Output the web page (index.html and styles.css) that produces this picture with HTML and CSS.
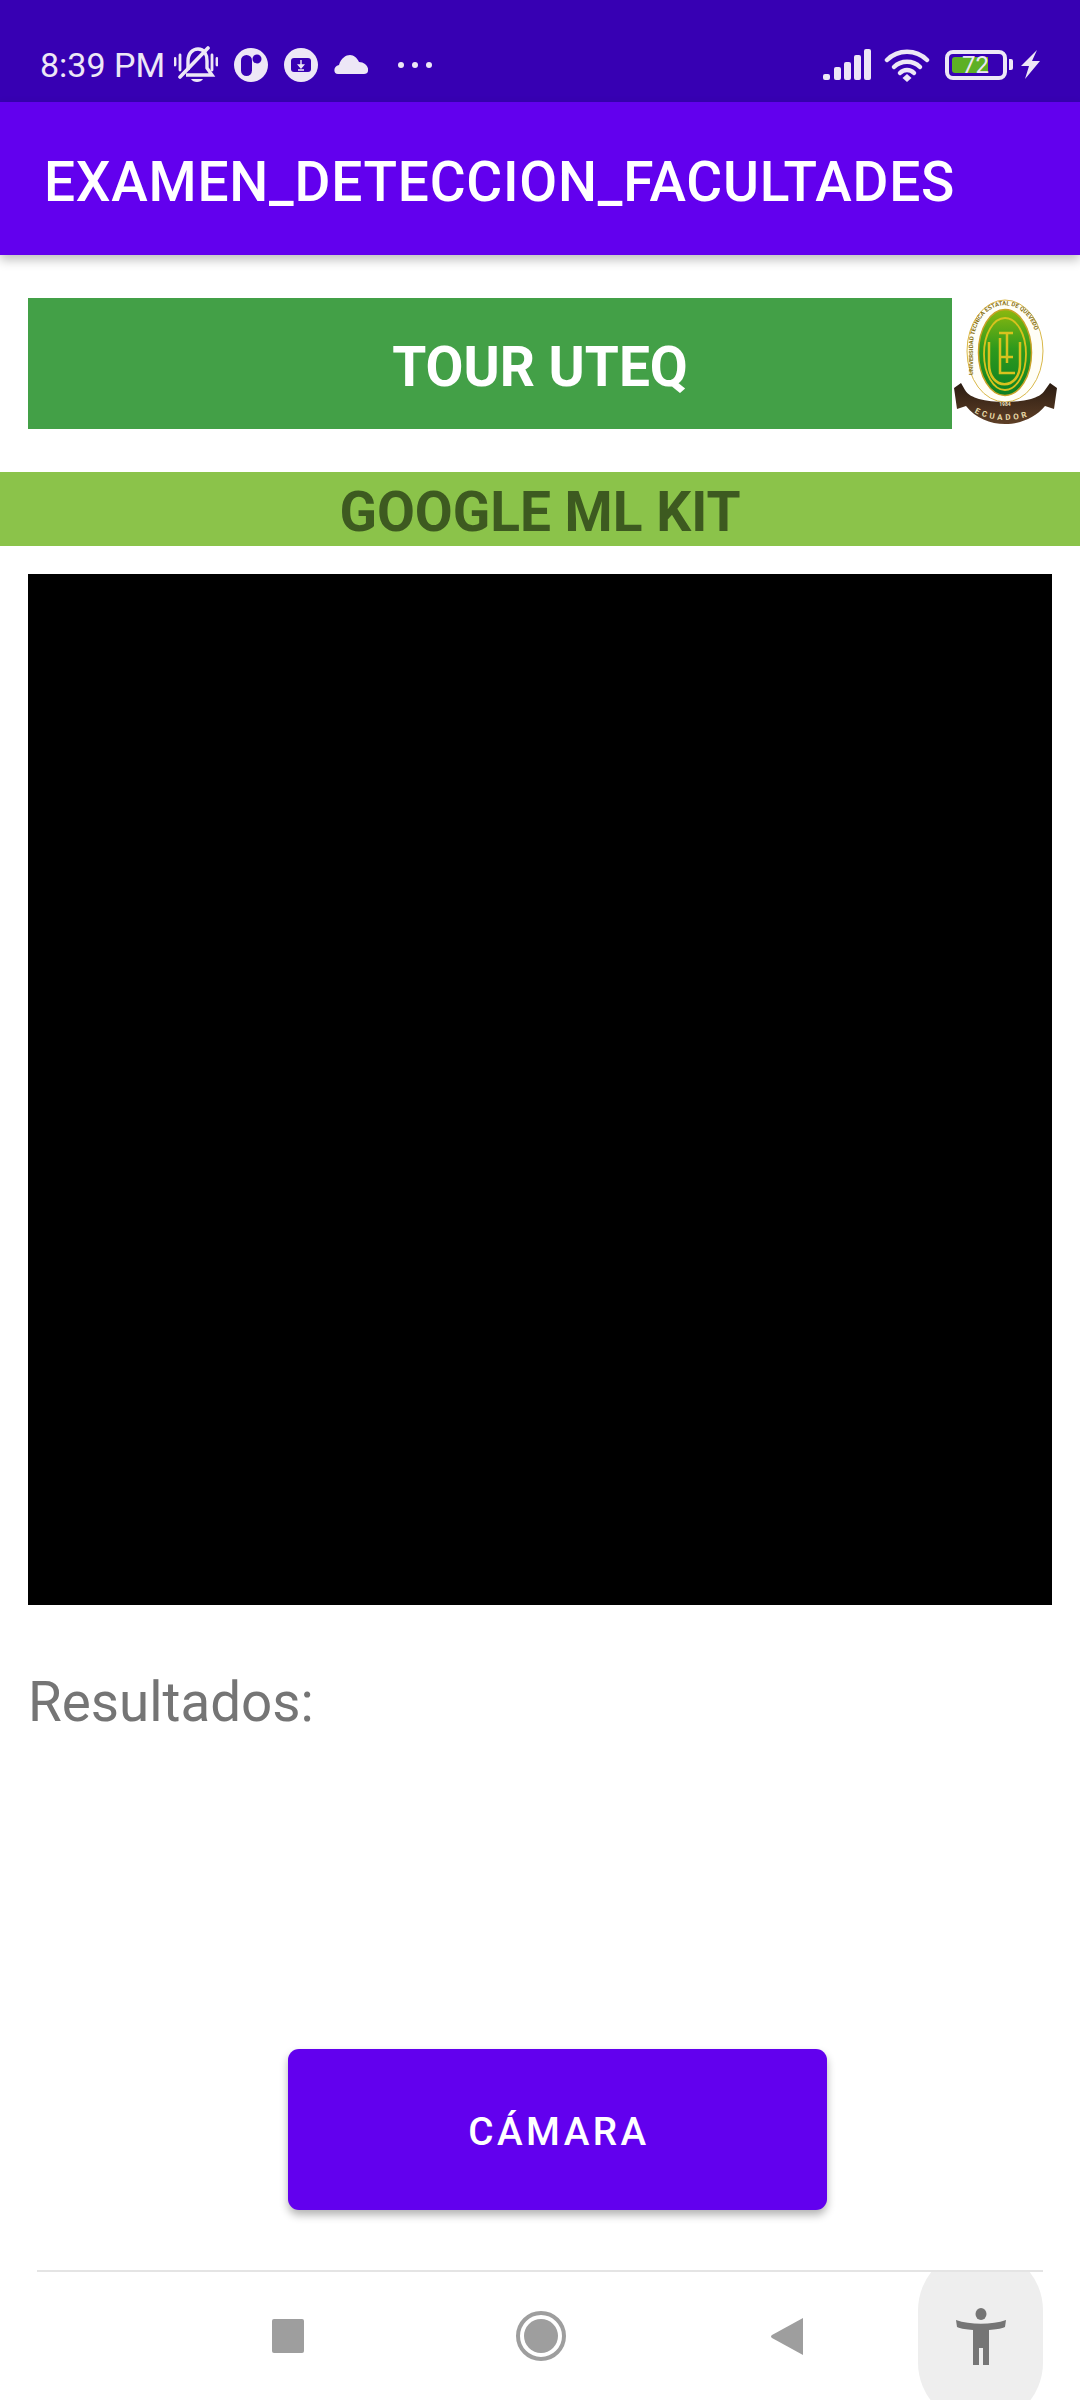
FILE: index.html
```html
<!DOCTYPE html>
<html lang="en">
<head>
    <meta charset="UTF-8">
    <meta name="viewport" content="width=device-width, initial-scale=1.0">
    <title>EXAMEN_DETECCION_FACULTADES</title>
    <link rel="stylesheet" href="styles.css">
</head>
<body>
    <!-- Status bar -->
    <div class="status-bar">
        <span class="clock">8:39 PM</span>
        <svg class="ic-bell" viewBox="0 0 44 37" width="44" height="37">
            <path d="M14 24 V15 C14 7 19 3 24 3 C30 3 33 8 33 15 V22 L38 29 H12" fill="none" stroke="#ede7f6" stroke-width="3.4"/>
            <path d="M17 33 H29 C27 37 19 37 17 33 Z" fill="#ede7f6"/>
            <path d="M6 31 L34 2" stroke="#ede7f6" stroke-width="3.6" stroke-linecap="round"/>
            <path d="M1 12.500 V19 M6 9 V24 M38 9 V24 M43 12.500 V19" stroke="#ede7f6" stroke-width="2.8" stroke-linecap="round"/>
        </svg>
        <svg class="ic-circle" viewBox="0 0 34 34" width="34" height="34">
            <circle cx="17" cy="17" r="17" fill="#ede7f6"/>
            <rect x="7" y="7" width="11" height="21" rx="5.500" fill="#3700b3"/>
            <circle cx="23" cy="11" r="4.500" fill="#3700b3"/>
        </svg>
        <svg class="ic-circle" viewBox="0 0 34 34" width="34" height="34">
            <circle cx="17" cy="17" r="17" fill="#ede7f6"/>
            <rect x="7" y="10" width="20" height="14" rx="3" fill="#3700b3"/>
            <path d="M17 12 V18 M14.500 17 H19.500 L17 20 Z M14 22 H20" stroke="#ede7f6" stroke-width="1.400" fill="#ede7f6"/>
        </svg>
        <svg class="ic-cloud" viewBox="0 0 34 19" width="34" height="19">
            <path d="M4 19 C-1 19 -1 11 5 10 C7 3 12 0 16 0 C20 0 23 3 25 7 C31 7 35 12 34 16 C34 18 32 19 30 19 Z" fill="#ede7f6"/>
        </svg>
        <div class="dots"><i></i><i></i><i></i></div>

        <div class="status-right">
            <svg viewBox="0 0 48 31" width="48" height="31">
                <g fill="#ede7f6">
                    <rect x="0" y="25" width="7" height="6" rx="2"/>
                    <rect x="11" y="18" width="7" height="13" rx="2"/>
                    <rect x="21" y="13" width="7" height="18" rx="2"/>
                    <rect x="31" y="6" width="7" height="25" rx="2"/>
                    <rect x="41" y="0" width="7" height="31" rx="2"/>
                </g>
            </svg>
            <svg class="ic-wifi" viewBox="0 0 46 34" width="46" height="34">
                <g fill="none" stroke="#ede7f6" stroke-width="4.500" stroke-linecap="round">
                    <path d="M3 12 C14 1 32 1 43 12"/>
                    <path d="M10 19 C17 12 29 12 36 19"/>
                    <path d="M16 25 C20 21 26 21 30 25"/>
                </g>
                <path d="M18.500 30 L23 26 L27.500 30 L23 34 Z" fill="#ede7f6"/>
            </svg>
            <div class="battery">
                <div class="battery-body">
                    <div class="battery-fill"></div>
                    <span class="battery-num">72</span>
                </div>
                <div class="battery-nub"></div>
            </div>
            <svg class="ic-bolt" viewBox="0 0 19 29" width="19" height="29">
                <path d="M16 0 L0 16 H8 L4 29 L19 11 H11 Z" fill="#ede7f6"/>
            </svg>
        </div>
    </div>

    <!-- App bar -->
    <header class="app-bar">EXAMEN_DETECCION_FACULTADES</header>

    <main class="content">
        <div class="tour-row">
            <div class="tour-btn">TOUR UTEQ</div>
            <svg class="logo" viewBox="0 0 105 130" width="105" height="130">
                <defs>
                    <linearGradient id="greenFill" x1="0" y1="0" x2="0" y2="1">
                        <stop offset="0" stop-color="#8cb80f"/>
                        <stop offset="0.45" stop-color="#2f9a1c"/>
                        <stop offset="1" stop-color="#0c7f24"/>
                    </linearGradient>
                    <linearGradient id="ribbonFill" x1="0" y1="0" x2="0" y2="1">
                        <stop offset="0" stop-color="#2b1c12"/>
                        <stop offset="1" stop-color="#5e3f26"/>
                    </linearGradient>
                    <path id="sealArc" d="M20 80 V50 C20 -7 84 -7 84 50 V80"/>
                    <path id="ribbonArc" d="M16 110 C32 126 72 126 90 110"/>
                </defs>
                <ellipse cx="52" cy="53" rx="38" ry="51" fill="#fffef6" stroke="#d9b84a" stroke-width="1"/>
                <text class="seal-text"><textPath href="#sealArc" startOffset="3">UNIVERSIDAD TECNICA ESTATAL DE QUEVEDO</textPath></text>
                <ellipse cx="52" cy="54.500" rx="26.500" ry="43" fill="url(#greenFill)" stroke="#c9a227" stroke-width="1.500"/>
                <g fill="none" stroke="#d8c21e">
                    <ellipse cx="52" cy="56" rx="21" ry="36" stroke-width="1.800"/>
                    <path d="M36 44 V66 C36 93 67 93 67 66 V44" stroke-width="2.500"/>
                    <path d="M46 35 H60 M54 34 V65 M46 59 H60 M47 40 V75 H62" stroke-width="2.500"/>
                </g>
                <path d="M1 90 L8 85 L12 92 C15 97 20 99 26 101 C40 105 64 105 78 101 C84 99 89 97 92 92 L97 85 L104 90 L101 111 L92 108 C72 132 32 132 13 108 L4 111 Z" fill="url(#ribbonFill)"/>
                <text class="ribbon-year" x="52" y="108" text-anchor="middle">1984</text>
                <text class="ribbon-text"><textPath href="#ribbonArc" startOffset="7">ECUADOR</textPath></text>
            </svg>
        </div>

        <div class="ml-bar">GOOGLE ML KIT</div>

        <div class="preview"></div>

        <p class="results">Resultados:</p>

        <div class="cam-row">
            <button class="cam-btn">CÁMARA</button>
        </div>
    </main>

    <!-- Navigation bar -->
    <nav class="nav-bar">
        <div class="nav-square"></div>
        <div class="nav-circle"><div class="nav-circle-in"></div></div>
        <svg class="nav-back" viewBox="0 0 32 37" width="32" height="37">
            <path d="M32 0 V37 L1 20 Q-1 18.500 1 17 Z" fill="#9e9e9e"/>
        </svg>
        <div class="a11y-pill">
            <svg viewBox="0 0 50 57" width="50" height="57">
                <ellipse cx="25" cy="6" rx="5.500" ry="6" fill="#757575"/>
                <path d="M0 12 C14 17 36 17 50 12 L49 19 C44 21 40 21.500 33 22 V57 H27 V40 H23 V57 H17 V22 C10 21.500 6 21 1 19 Z" fill="#757575"/>
            </svg>
        </div>
    </nav>
</body>
</html>
```

FILE: styles.css
```css
* {
    box-sizing: border-box;
}

body {
    margin: 0;
    width: 1080px;
    height: 2400px;
    display: flex;
    flex-direction: column;
    font-family: Roboto, 'Liberation Sans', sans-serif;
    background: #fff;
    overflow: hidden;
}

.status-bar {
    height: 102px;
    flex-shrink: 0;
    background: #3700b3;
    color: #ede7f6;
    display: flex;
    align-items: center;
    padding: 27px 40px 0 40px;
}

.clock {
    font-size: 34px;
    width: 134px;
    white-space: nowrap;
}

.ic-bell {
    margin-right: 16px;
}

.ic-circle {
    margin-right: 16px;
}

.dots {
    display: flex;
    gap: 8px;
    margin-left: 30px;
}

.dots i {
    display: block;
    width: 6px;
    height: 6px;
    border-radius: 50%;
    background: #ede7f6;
}

.status-right {
    margin-left: auto;
    display: flex;
    align-items: center;
}

.ic-wifi {
    margin-left: 13px;
}

.battery {
    display: flex;
    align-items: center;
    margin-left: 15px;
}

.battery-body {
    width: 62px;
    height: 30px;
    border: 4px solid #ede7f6;
    border-radius: 8px;
    padding: 3px;
    position: relative;
}

.battery-fill {
    width: 36px;
    height: 16px;
    background: #5db025;
    border-radius: 3px 0 0 3px;
}

.battery-num {
    position: absolute;
    top: -3px;
    left: 13px;
    font-size: 24px;
    line-height: 28px;
    color: #ede7f6;
}

.battery-nub {
    width: 4px;
    height: 11px;
    margin-left: 2px;
    background: #ede7f6;
    border-radius: 0 2px 2px 0;
}

.ic-bolt {
    margin-left: 8px;
}

.app-bar {
    height: 153px;
    flex-shrink: 0;
    background: #6200ee;
    color: #fff;
    font-size: 55px;
    font-weight: 500;
    letter-spacing: 0.014em;
    display: flex;
    align-items: center;
    padding: 6px 0 0 44px;
    box-shadow: 0 5px 10px rgba(0, 0, 0, 0.25);
    position: relative;
}

.content {
    flex: 1;
    display: flex;
    flex-direction: column;
}

.tour-row {
    display: flex;
    align-items: flex-start;
    margin-top: 43px;
    padding-left: 28px;
}

.tour-btn {
    width: 924px;
    height: 131px;
    margin-right: 1px;
    padding-left: 100px;
    background: #43a047;
    color: #fff;
    font-size: 55px;
    font-weight: 700;
    text-align: center;
    line-height: 138px;
}

.logo {
    display: block;
}

.seal-text {
    font-size: 6px;
    fill: #8a7417;
    font-weight: 700;
}

.ribbon-year {
    font-size: 5px;
    fill: #efe3c0;
    font-weight: 700;
}

.ribbon-text {
    font-size: 8px;
    fill: #e8d9a8;
    font-weight: 700;
    letter-spacing: 3px;
}

.ml-bar {
    margin-top: 43px;
    height: 74px;
    background: #8bc34a;
    color: #3d5a20;
    font-size: 55px;
    font-weight: 700;
    text-align: center;
    line-height: 80px;
}

.preview {
    margin: 28px 28px 0;
    height: 1031px;
    background: #000;
}

.results {
    margin: 65px 0 0 28px;
    font-size: 54.75px;
    line-height: 65px;
    color: #757575;
}

.cam-row {
    margin-top: 314px;
    padding-left: 288px;
}

.cam-btn {
    display: block;
    width: 539px;
    height: 161px;
    padding: 4px 0 0 3px;
    border: none;
    border-radius: 11px;
    background: #6200ee;
    color: #fff;
    font-family: inherit;
    font-size: 38.7px;
    font-weight: 500;
    letter-spacing: 0.0892857em;
    box-shadow: 0 5px 8px rgba(0, 0, 0, 0.3);
}

.nav-bar {
    height: 130px;
    flex-shrink: 0;
    margin: 0 37px;
    border-top: 2px solid #e4e4e4;
    display: flex;
    align-items: center;
    padding: 0 0 0 235px;
    position: relative;
    overflow: hidden;
}

.nav-square {
    width: 32px;
    height: 34px;
    background: #9e9e9e;
    border-radius: 2px;
}

.nav-circle {
    width: 50px;
    height: 50px;
    margin-left: 212px;
    border-radius: 50%;
    border: 4px solid #9e9e9e;
    padding: 4px;
}

.nav-circle-in {
    width: 100%;
    height: 100%;
    border-radius: 50%;
    background: #9e9e9e;
}

.nav-back {
    margin-left: 205px;
}

.a11y-pill {
    position: absolute;
    top: -24px;
    bottom: -25px;
    right: 0;
    width: 125px;
    border-radius: 62.5px;
    background: #eee;
    display: flex;
    align-items: center;
    justify-content: center;
}
```
